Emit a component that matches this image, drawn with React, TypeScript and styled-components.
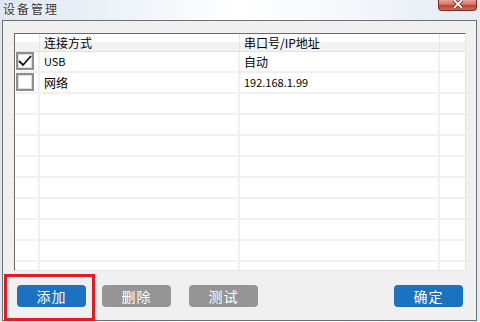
import React from "react";
import styled, { createGlobalStyle } from "styled-components";

const Global = createGlobalStyle`
  html, body { margin: 0; padding: 0; }
  body {
    width: 480px; height: 322px; overflow: hidden;
    background: #e8eff7;
    font-family: "Noto Sans CJK SC", "Liberation Sans", sans-serif;
  }
`;

const Window = styled.div`
  position: relative;
  width: 480px;
  height: 322px;
  display: flex;
  flex-direction: column;
  background: linear-gradient(to right, #dde6f0 0%, #eef3f8 25%, #ffffff 50%, #f3f6fa 75%, #e4ebf3 100%);
`;

const TitleBar = styled.div`
  height: 20px;
  display: flex;
  align-items: flex-start;
  justify-content: space-between;
  padding-left: 3px;
`;

const Title = styled.div`
  font-size: 12px;
  line-height: 17px;
  color: #3a3a3a;
  letter-spacing: 2px;
  text-shadow: 0 0 6px #fff;
`;

const CloseButton = styled.div`
  width: 39px;
  height: 11px;
  margin-right: 3px;
  box-sizing: border-box;
  border: 1px solid #7a2a22;
  border-top: none;
  border-radius: 0 0 4px 4px;
  background: linear-gradient(to bottom, #e6a797 0%, #d5725f 45%, #c4452e 55%, #d0694f 100%);
  display: flex;
  align-items: flex-start;
  justify-content: center;
`;

const Body = styled.div`
  margin-left: 2px;
  width: 475px;
  height: 301px;
  box-sizing: border-box;
  border: 1px solid #6f6f6f;
  background: #f0f0f0;
  padding: 12px 0 0 11px;
  display: flex;
  flex-direction: column;
`;

const Table = styled.div`
  width: 452px;
  height: 238px;
  box-sizing: border-box;
  border-top: 1px solid #6a6a6a;
  border-left: 1px solid #6a6a6a;
  border-right: 1px solid #e3e3e3;
  border-bottom: 1px solid #e3e3e3;
  box-shadow: inset 1px 1px 0 #a0a0a0;
  background: #ffffff;
  overflow: hidden;
`;

const Row = styled.div<{ $header?: boolean }>`
  display: grid;
  grid-template-columns: 25px 200px 200px 25px;
  height: ${(p) => (p.$header ? "18px" : "21px")};
  box-sizing: border-box;
  border-bottom: ${(p) => (p.$header ? "1px solid #e2e2e2" : "2px solid #f0f0f0")};
  background: ${(p) =>
    p.$header ? "linear-gradient(to bottom, #ffffff 0%, #ffffff 45%, #f2f2f2 50%, #f2f2f2 100%)" : "#fff"};
`;

const Cell = styled.div<{ $header?: boolean; $last?: boolean; $small?: boolean }>`
  box-sizing: border-box;
  border-right: ${(p) => (p.$last ? "none" : p.$header ? "1px solid #e6e6e6" : "2px solid #f0f0f0")};
  padding-left: 4px;
  font-size: ${(p) => (p.$small ? "11px" : "12px")};
  line-height: ${(p) => (p.$header ? "18px" : "19px")};
  color: #000;
  white-space: nowrap;
  display: flex;
  align-items: center;
`;

const CheckCell = styled(Cell)`
  padding-left: 1px;
  align-items: flex-start;
`;

const CheckBox = styled.div`
  width: 18px;
  height: 18px;
  box-sizing: border-box;
  border: 2px solid #8e8e8e;
  box-shadow: inset 0 0 0 1px #dcdcdc;
  background: #fff;
  display: flex;
  align-items: center;
  justify-content: center;
`;

const Buttons = styled.div`
  display: flex;
  margin-top: 14px;
  padding-left: 3px;
`;

const Button = styled.div<{ $primary?: boolean; $gap?: number; $push?: boolean }>`
  width: 69px;
  height: 22px;
  margin-left: ${(p) => (p.$push ? "auto" : `${p.$gap ?? 0}px`)};
  margin-right: ${(p) => (p.$push ? "13px" : "0")};
  border-radius: 4px;
  background: ${(p) => (p.$primary ? "#1a72c0" : "#959595")};
  color: #fff;
  font-size: 14px;
  font-family: "Noto Sans CJK SC", sans-serif;
  display: flex;
  align-items: center;
  justify-content: center;
  letter-spacing: 1px;
`;

const Highlight = styled.div`
  position: absolute;
  left: 4px;
  top: 274px;
  width: 91px;
  height: 47px;
  box-sizing: border-box;
  border: 3px solid #e51b23;
  pointer-events: none;
`;

const rows: { checked: boolean; name: string; addr: string; nameSmall?: boolean; addrSmall?: boolean }[] = [
  { checked: true, name: "USB", addr: "自动", nameSmall: true },
  { checked: false, name: "网络", addr: "192.168.1.99", addrSmall: true },
];

export default function App() {
  const empties = Array.from({ length: 9 });
  return (
    <>
      <Global />
      <Window>
        <TitleBar>
          <Title>设备管理</Title>
          <CloseButton>
            <svg width="12" height="9" viewBox="0 0 12 9">
              <path d="M2 0 L10 8 M10 0 L2 8" stroke="#5a1a12" strokeWidth="3.2" />
              <path d="M2 0 L10 8 M10 0 L2 8" stroke="#ffffff" strokeWidth="1.8" />
            </svg>
          </CloseButton>
        </TitleBar>
        <Body>
          <Table>
            <Row $header>
              <Cell $header />
              <Cell $header>连接方式</Cell>
              <Cell $header>串口号/IP地址</Cell>
              <Cell $header $last />
            </Row>
            {rows.map((r, i) => (
              <Row key={i}>
                <CheckCell>
                  <CheckBox>
                    {r.checked && (
                      <svg width="14" height="12" viewBox="0 0 14 12">
                        <path d="M1 6 L5 10 L13 1" fill="none" stroke="#111" strokeWidth="1.8" />
                      </svg>
                    )}
                  </CheckBox>
                </CheckCell>
                <Cell $small={r.nameSmall}>{r.name}</Cell>
                <Cell $small={r.addrSmall}>{r.addr}</Cell>
                <Cell $last />
              </Row>
            ))}
            {empties.map((_, i) => (
              <Row key={"e" + i}>
                <Cell />
                <Cell />
                <Cell />
                <Cell $last />
              </Row>
            ))}
          </Table>
          <Buttons>
            <Button $primary>添加</Button>
            <Button $gap={16}>删除</Button>
            <Button $gap={18}>测试</Button>
            <Button $primary $push>确定</Button>
          </Buttons>
        </Body>
        <Highlight />
      </Window>
    </>
  );
}
